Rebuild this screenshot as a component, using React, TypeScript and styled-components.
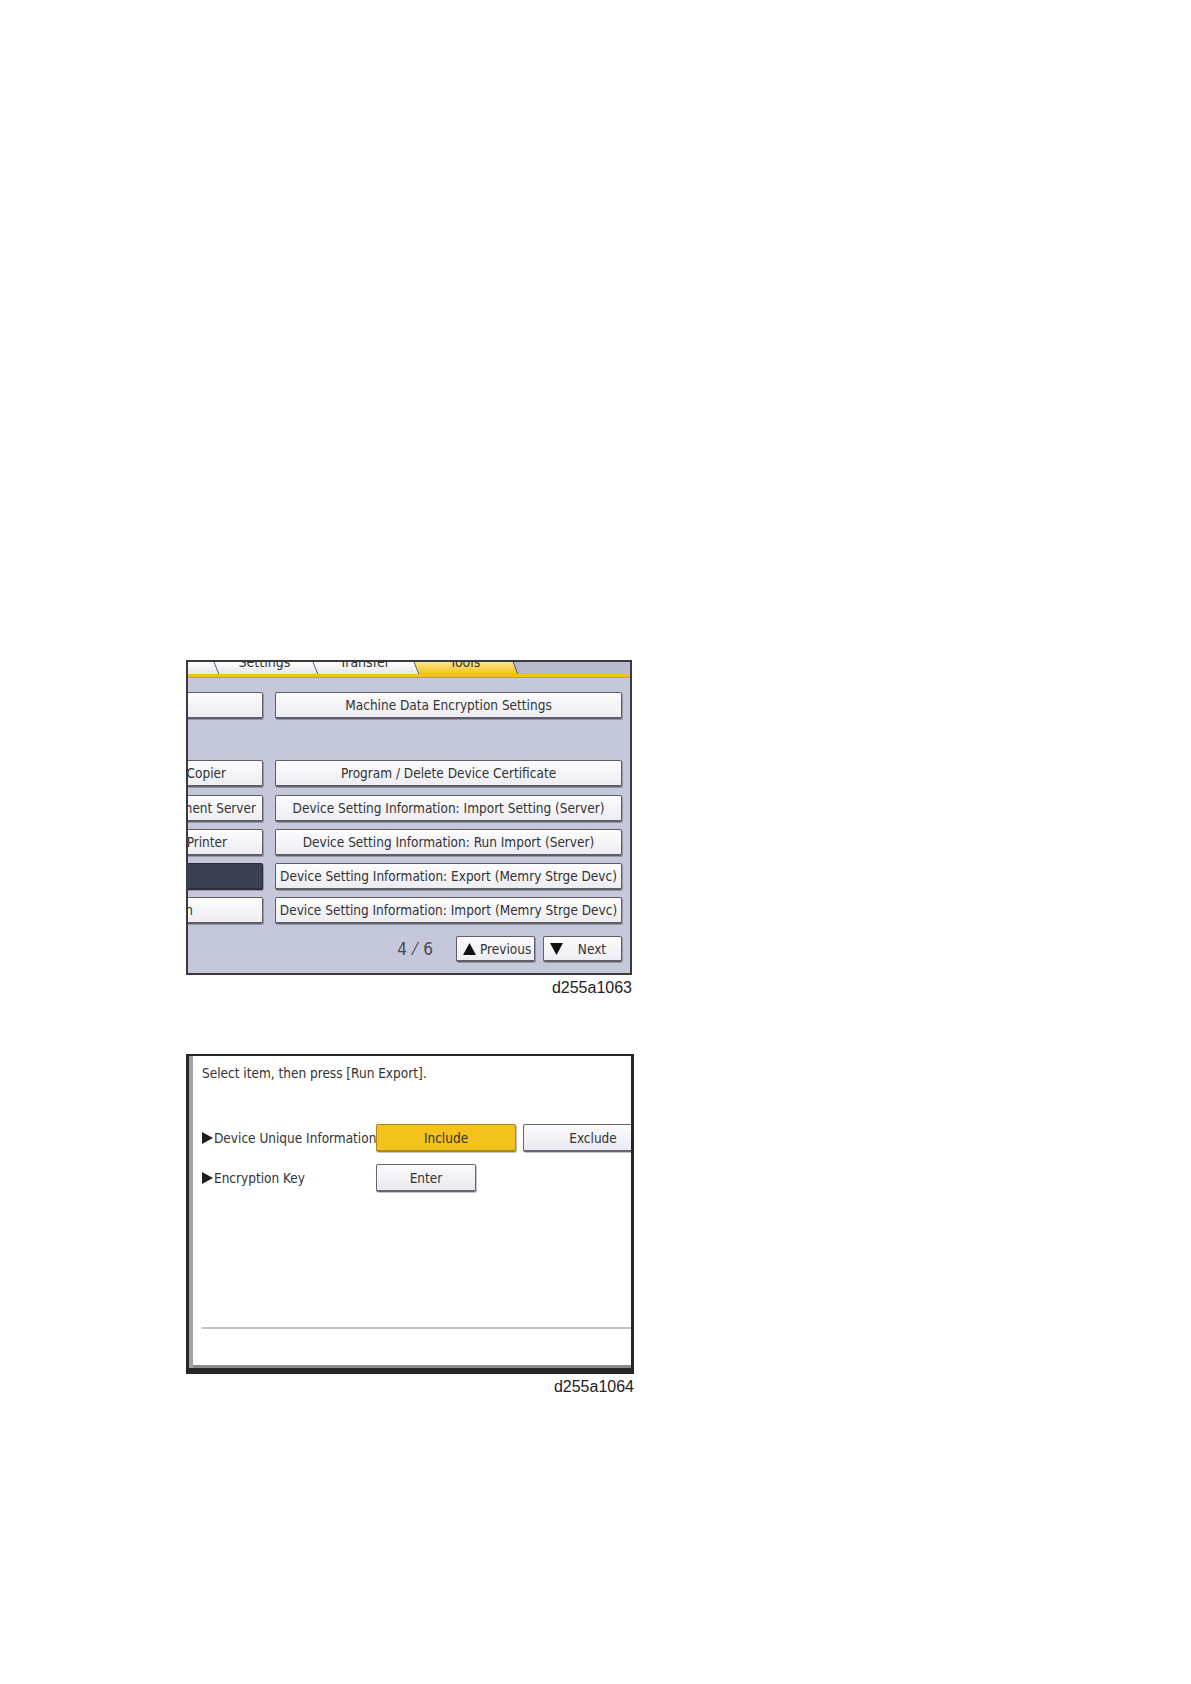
import React from 'react';
import styled, { createGlobalStyle } from 'styled-components';

const GlobalStyle = createGlobalStyle`
  html, body {
    margin: 0;
    padding: 0;
    background: #ffffff;
  }
  body {
    font-family: "Liberation Sans", Arial, sans-serif;
  }
`;

const uiFont = `"Liberation Sans Narrow", "DejaVu Sans Condensed", "Liberation Sans", sans-serif`;

const Page = styled.div`
  width: 1191px;
  min-height: 1684px;
  box-sizing: border-box;
  padding: 660px 0 0 186px;
  display: flex;
  flex-direction: column;
`;

const Figure = styled.figure<{ $width: number; $gap?: number }>`
  margin: 0 0 ${(p) => p.$gap ?? 0}px 0;
  width: ${(p) => p.$width}px;
  display: flex;
  flex-direction: column;
`;

const Caption = styled.figcaption`
  align-self: flex-end;
  margin-top: 4px;
  font-family: "Liberation Sans", Arial, sans-serif;
  font-size: 16px;
  line-height: 18px;
  color: #222;
`;

/* ---------- first screen: Tools menu ---------- */

const MenuPanel = styled.div`
  height: 315px;
  box-sizing: border-box;
  border: 2px solid #3a3a3e;
  background: #c5c7da;
  overflow: hidden;
  display: flex;
  flex-direction: column;
  font-family: ${uiFont};
  color: #333;
`;

const TabStrip = styled.div`
  height: 12px;
  display: flex;
  background: #b9bbcd;
  overflow: hidden;
`;

const Tab = styled.div<{ $w: number; $active?: boolean }>`
  flex: 0 0 ${(p) => p.$w}px;
  height: 100%;
  transform: skewX(22deg);
  transform-origin: center;
  border-right: 1px solid #55555c;
  background: ${(p) =>
    p.$active
      ? 'linear-gradient(#fbe78a, #f2c316)'
      : 'linear-gradient(#ffffff, #e6e6ea)'};
  overflow: hidden;
  display: flex;
  justify-content: center;
`;

const FirstTab = styled(Tab)`
  margin-left: -6px;
`;

const TabLabel = styled.span`
  display: block;
  transform: skewX(-22deg);
  font-size: 14px;
  line-height: 14px;
  margin-top: -7px;
  white-space: nowrap;
  color: #333;
`;

const TabLine = styled.div`
  height: 3px;
  background: #f2c316;
  border-bottom: 1px solid #a8a070;
`;

const MenuBody = styled.div`
  flex: 1;
  padding: 14px 8px 10px 0;
  display: flex;
  flex-direction: column;
`;

const MenuGrid = styled.div`
  display: grid;
  grid-template-columns: 75px 347px;
  grid-template-rows: repeat(7, 27px);
  column-gap: 12px;
  row-gap: 7.2px;
`;

const KeyButton = styled.div`
  box-sizing: border-box;
  height: 100%;
  border: 1px solid #5e5e66;
  border-bottom-width: 2px;
  border-radius: 2px;
  background: linear-gradient(#fdfdff, #ececf2);
  box-shadow: 1px 1px 0 rgba(60, 60, 70, 0.35);
  font-size: 13.5px;
  white-space: nowrap;
  overflow: hidden;
  display: flex;
  align-items: center;
`;

const SideKey = styled(KeyButton)<{ $end: number; $dark?: boolean }>`
  margin-left: -6px;
  justify-content: flex-end;
  padding-right: ${(p) => p.$end}px;
  ${(p) =>
    p.$dark &&
    `
    background: #3b3f52;
    border-color: #2a2d3a;
  `}
`;

const MainKey = styled(KeyButton)`
  grid-column: 2;
  justify-content: center;
`;

const Pager = styled.div`
  margin-top: 12px;
  height: 26px;
  display: flex;
  justify-content: flex-end;
  align-items: center;
  gap: 8px;
`;

const PageCount = styled.span`
  font-size: 17px;
  letter-spacing: 1px;
  color: #4a4a50;
  margin-right: 14px;
`;

const PageKey = styled(KeyButton)`
  width: 79px;
  padding-left: 6px;
  gap: 4px;
`;

const PageKeyText = styled.span`
  flex: 1;
  text-align: center;
  padding-right: 4px;
`;

const ArrowIcon = styled.svg`
  flex-shrink: 0;
`;

const Arrow = ({ down }: { down?: boolean }) => (
  <ArrowIcon width="13" height="12" viewBox="0 0 13 12">
    <path d={down ? 'M0 0 H13 L6.5 12 Z' : 'M6.5 0 L13 12 H0 Z'} fill="#111" />
  </ArrowIcon>
);

/* ---------- second screen: export options ---------- */

const ExportPanel = styled.div`
  height: 320px;
  box-sizing: border-box;
  border: 3px solid #262628;
  border-top-width: 2px;
  border-bottom-width: 6px;
  box-shadow: inset 4px 0 0 #a2a2a6, inset 0 -3px 0 #8c8c90;
  background: #ffffff;
  overflow: hidden;
  padding: 8px 0 39px 13px;
  display: flex;
  flex-direction: column;
  font-family: ${uiFont};
  color: #333;
`;

const Prompt = styled.div`
  font-size: 13.5px;
  line-height: 18px;
`;

const OptionGrid = styled.div`
  margin-top: 42px;
  display: grid;
  grid-template-columns: 167px 140px 140px;
  grid-auto-rows: 28px;
  column-gap: 7px;
  row-gap: 12px;
`;

const OptionLabel = styled.div`
  display: flex;
  align-items: center;
  font-size: 13.5px;
  white-space: nowrap;
  min-width: 0;

  &::before {
    content: '';
    flex-shrink: 0;
    width: 0;
    height: 0;
    border-left: 11px solid #1e1e22;
    border-top: 6px solid transparent;
    border-bottom: 6px solid transparent;
    margin-right: 1px;
  }
`;

const OptionKey = styled.div<{ $on?: boolean; $w?: number }>`
  box-sizing: border-box;
  width: ${(p) => (p.$w ? `${p.$w}px` : 'auto')};
  height: 28px;
  border: 1px solid ${(p) => (p.$on ? '#a8881a' : '#66666e')};
  border-bottom-width: 2px;
  border-radius: 2px;
  background: ${(p) =>
    p.$on ? '#f3c21c' : 'linear-gradient(#fbfbfd, #e9e9f1)'};
  box-shadow: 1px 1px 0 rgba(60, 60, 70, 0.3);
  font-size: 13.5px;
  display: flex;
  align-items: center;
  justify-content: center;
  white-space: nowrap;
`;

const Divider = styled.div`
  margin-top: auto;
  height: 2px;
  background: #c2c2c4;
`;

const sideKeys = [
  { label: '', end: 0 },
  null,
  { label: 'Copier', end: 36 },
  { label: 'Document Server', end: 6 },
  { label: 'Printer', end: 35 },
  { label: '', end: 0, dark: true },
  { label: 'Extended Feature Information', end: 69 },
];

const mainKeys = [
  'Machine Data Encryption Settings',
  null,
  'Program / Delete Device Certificate',
  'Device Setting Information: Import Setting (Server)',
  'Device Setting Information: Run Import (Server)',
  'Device Setting Information: Export (Memry Strge Devc)',
  'Device Setting Information: Import (Memry Strge Devc)',
];

const App: React.FC = () => {
  return (
    <>
      <GlobalStyle />
      <Page>
        <Figure $width={446} $gap={57}>
          <MenuPanel>
            <TabStrip>
              <FirstTab $w={34} />
              <Tab $w={98}>
                <TabLabel>Settings</TabLabel>
              </Tab>
              <Tab $w={100}>
                <TabLabel>Transfer</TabLabel>
              </Tab>
              <Tab $w={98} $active>
                <TabLabel>Tools</TabLabel>
              </Tab>
            </TabStrip>
            <TabLine />
            <MenuBody>
              <MenuGrid>
                {mainKeys.map((label, i) => {
                  const side = sideKeys[i];
                  return (
                    <React.Fragment key={i}>
                      {side && (
                        <SideKey $end={side.end} $dark={side.dark} style={{ gridRow: i + 1 }}>
                          {side.label}
                        </SideKey>
                      )}
                      {label && <MainKey style={{ gridRow: i + 1 }}>{label}</MainKey>}
                    </React.Fragment>
                  );
                })}
              </MenuGrid>
              <Pager>
                <PageCount>4 ⁄ 6</PageCount>
                <PageKey>
                  <Arrow />
                  <PageKeyText>Previous</PageKeyText>
                </PageKey>
                <PageKey>
                  <Arrow down />
                  <PageKeyText>Next</PageKeyText>
                </PageKey>
              </Pager>
            </MenuBody>
          </MenuPanel>
          <Caption>d255a1063</Caption>
        </Figure>

        <Figure $width={448}>
          <ExportPanel>
            <Prompt>Select item, then press [Run Export].</Prompt>
            <OptionGrid>
              <OptionLabel>Device Unique Information</OptionLabel>
              <OptionKey $on>Include</OptionKey>
              <OptionKey>Exclude</OptionKey>
              <OptionLabel>Encryption Key</OptionLabel>
              <OptionKey $w={100}>Enter</OptionKey>
            </OptionGrid>
            <Divider />
          </ExportPanel>
          <Caption>d255a1064</Caption>
        </Figure>
      </Page>
    </>
  );
};

export default App;
